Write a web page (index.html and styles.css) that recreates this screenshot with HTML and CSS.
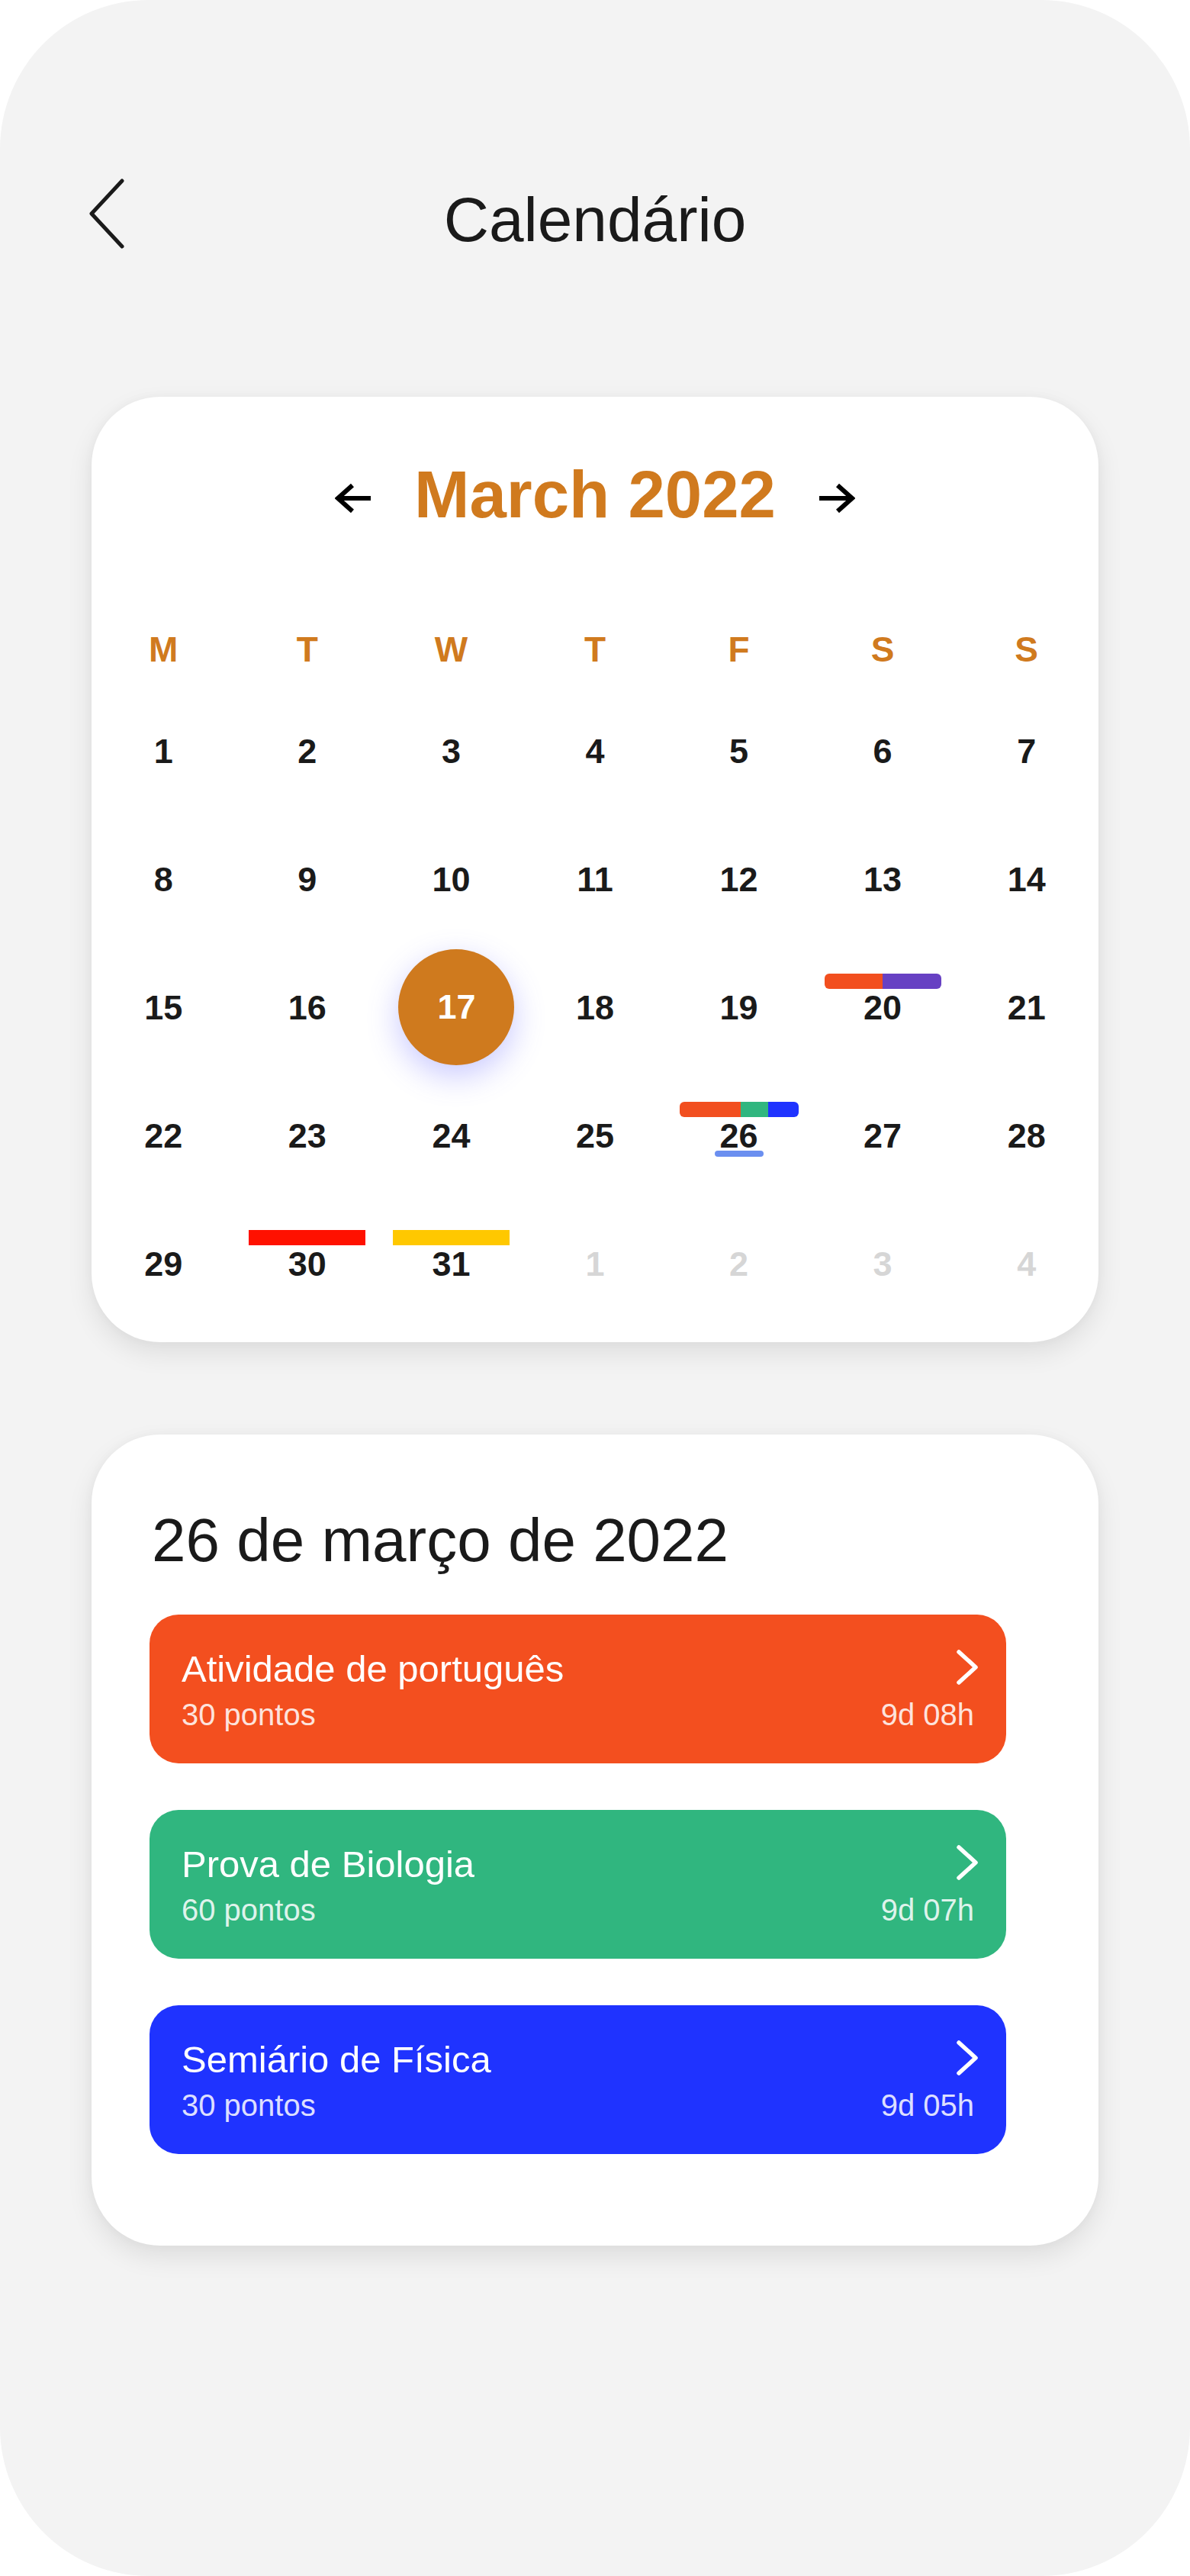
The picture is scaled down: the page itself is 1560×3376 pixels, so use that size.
FILE: index.html
```html
<!DOCTYPE html>
<html lang="pt">
<head>
<meta charset="utf-8">
<title>Calendário</title>
<link rel="stylesheet" href="styles.css">
</head>
<body>
<div class="phone">
  <header class="topbar">
    <button class="back" aria-label="Voltar">
      <svg width="50" height="94" viewBox="0 0 50 94"><path d="M45 4 L5 47 L45 90" fill="none" stroke="#1a1a1a" stroke-width="5" stroke-linecap="round" stroke-linejoin="round"/></svg>
    </button>
    <h1 class="title">Calendário</h1>
    <span class="spacer"></span>
  </header>

  <section class="card cal">
    <div class="month">
      <svg class="arrow" width="50" height="40" viewBox="0 0 50 40"><path d="M47 20 H5 M23 3 L4 20 L23 37" fill="none" stroke="#000" stroke-width="6" stroke-linejoin="miter"/></svg>
      <h2 class="month-name">March 2022</h2>
      <svg class="arrow" width="50" height="40" viewBox="0 0 50 40"><path d="M3 20 H45 M27 3 L46 20 L27 37" fill="none" stroke="#000" stroke-width="6" stroke-linejoin="miter"/></svg>
    </div>

    <div class="weekdays">
      <span>M</span><span>T</span><span>W</span><span>T</span><span>F</span><span>S</span><span>S</span>
    </div>

    <div class="days">
      <div class="cell"><span class="mark"></span><span class="num">1</span></div>
      <div class="cell"><span class="mark"></span><span class="num">2</span></div>
      <div class="cell"><span class="mark"></span><span class="num">3</span></div>
      <div class="cell"><span class="mark"></span><span class="num">4</span></div>
      <div class="cell"><span class="mark"></span><span class="num">5</span></div>
      <div class="cell"><span class="mark"></span><span class="num">6</span></div>
      <div class="cell"><span class="mark"></span><span class="num">7</span></div>

      <div class="cell"><span class="mark"></span><span class="num">8</span></div>
      <div class="cell"><span class="mark"></span><span class="num">9</span></div>
      <div class="cell"><span class="mark"></span><span class="num">10</span></div>
      <div class="cell"><span class="mark"></span><span class="num">11</span></div>
      <div class="cell"><span class="mark"></span><span class="num">12</span></div>
      <div class="cell"><span class="mark"></span><span class="num">13</span></div>
      <div class="cell"><span class="mark"></span><span class="num">14</span></div>

      <div class="cell"><span class="mark"></span><span class="num">15</span></div>
      <div class="cell"><span class="mark"></span><span class="num">16</span></div>
      <div class="cell sel"><span class="circle"><span class="num">17</span></span></div>
      <div class="cell"><span class="mark"></span><span class="num">18</span></div>
      <div class="cell"><span class="mark"></span><span class="num">19</span></div>
      <div class="cell"><span class="mark on rounded"><i class="seg s-orange"></i><i class="seg s-purple"></i></span><span class="num">20</span></div>
      <div class="cell"><span class="mark"></span><span class="num">21</span></div>

      <div class="cell"><span class="mark"></span><span class="num">22</span></div>
      <div class="cell"><span class="mark"></span><span class="num">23</span></div>
      <div class="cell"><span class="mark"></span><span class="num">24</span></div>
      <div class="cell"><span class="mark"></span><span class="num">25</span></div>
      <div class="cell"><span class="mark on rounded wide"><i class="seg s-orange w80"></i><i class="seg s-green w36"></i><i class="seg s-blue w40"></i></span><span class="num">26</span><span class="uline"></span></div>
      <div class="cell"><span class="mark"></span><span class="num">27</span></div>
      <div class="cell"><span class="mark"></span><span class="num">28</span></div>

      <div class="cell"><span class="mark"></span><span class="num">29</span></div>
      <div class="cell"><span class="mark on"><i class="seg s-red"></i></span><span class="num">30</span></div>
      <div class="cell"><span class="mark on"><i class="seg s-yellow"></i></span><span class="num">31</span></div>
      <div class="cell other"><span class="mark"></span><span class="num">1</span></div>
      <div class="cell other"><span class="mark"></span><span class="num">2</span></div>
      <div class="cell other"><span class="mark"></span><span class="num">3</span></div>
      <div class="cell other"><span class="mark"></span><span class="num">4</span></div>
    </div>
  </section>

  <section class="card agenda">
    <h2 class="agenda-date">26 de março de 2022</h2>
    <ul class="events">
      <li class="event ev-orange">
        <div class="ev-row top"><span class="ev-title">Atividade de português</span><svg class="chev" width="30" height="48" viewBox="0 0 30 48"><path d="M4 4 L26 24 L4 44" fill="none" stroke="#fff" stroke-width="5.5" stroke-linecap="round" stroke-linejoin="round"/></svg></div>
        <div class="ev-row bottom"><span class="ev-sub">30 pontos</span><span class="ev-sub">9d 08h</span></div>
      </li>
      <li class="event ev-green">
        <div class="ev-row top"><span class="ev-title">Prova de Biologia</span><svg class="chev" width="30" height="48" viewBox="0 0 30 48"><path d="M4 4 L26 24 L4 44" fill="none" stroke="#fff" stroke-width="5.5" stroke-linecap="round" stroke-linejoin="round"/></svg></div>
        <div class="ev-row bottom"><span class="ev-sub">60 pontos</span><span class="ev-sub">9d 07h</span></div>
      </li>
      <li class="event ev-blue">
        <div class="ev-row top"><span class="ev-title">Semiário de Física</span><svg class="chev" width="30" height="48" viewBox="0 0 30 48"><path d="M4 4 L26 24 L4 44" fill="none" stroke="#fff" stroke-width="5.5" stroke-linecap="round" stroke-linejoin="round"/></svg></div>
        <div class="ev-row bottom"><span class="ev-sub">30 pontos</span><span class="ev-sub">9d 05h</span></div>
      </li>
    </ul>
  </section>
</div>
</body>
</html>
```

FILE: styles.css
```css
* { box-sizing: border-box; }

html, body {
  margin: 0;
  padding: 0;
  background: #ffffff;
}

body {
  font-family: "Liberation Sans", Arial, sans-serif;
  color: #1a1a1a;
}

.phone {
  width: 1560px;
  height: 3376px;
  background: #f3f3f3;
  border-radius: 195px;
  overflow: hidden;
  padding-top: 233px;
}

/* Header */
.topbar {
  display: grid;
  grid-template-columns: 1fr auto 1fr;
  align-items: start;
}

.back {
  justify-self: start;
  margin-left: 115px;
  padding: 0;
  border: 0;
  background: none;
  width: 50px;
  height: 94px;
  display: block;
}

.back svg { display: block; }

.title {
  margin: 8px 0 0;
  font-size: 82px;
  line-height: 93px;
  font-weight: 400;
  color: #1a1a1a;
}

/* Cards */
.card {
  background: #ffffff;
  border-radius: 90px;
  margin: 0 120px;
  box-shadow: 0 14px 34px rgba(0, 0, 0, 0.09), 0 0 14px rgba(0, 0, 0, 0.03);
}

.cal {
  margin-top: 186px;
  padding: 78px 0 19px;
}

.month {
  display: flex;
  justify-content: center;
  align-items: center;
  gap: 54px;
}

.arrow {
  display: block;
  margin-top: 10px;
}

.month-name {
  margin: 0;
  font-size: 87px;
  line-height: 99px;
  font-weight: 700;
  color: #d07a1e;
}

.weekdays {
  margin-top: 128px;
  display: grid;
  grid-template-columns: repeat(7, 1fr);
  text-align: center;
  font-size: 46px;
  line-height: 53px;
  font-weight: 700;
  color: #d07a1e;
}

.days {
  margin-top: 22px;
  display: grid;
  grid-template-columns: repeat(7, 1fr);
  grid-auto-rows: 168px;
}

.cell {
  display: flex;
  flex-direction: column;
  align-items: center;
  padding-top: 40px;
}

.mark {
  display: flex;
  width: 153px;
  height: 20px;
  flex: none;
  overflow: hidden;
}

.mark.rounded { border-radius: 6px; }
.mark.wide { width: 156px; }

.seg { display: block; flex: 1; height: 100%; }
.seg.w80 { flex: 80; }
.seg.w36 { flex: 36; }
.seg.w40 { flex: 40; }

.s-orange { background: #f24f1f; }
.s-purple { background: #6741c3; }
.s-green { background: #30b67f; }
.s-blue { background: #1f33ff; }
.s-red { background: #ff1100; }
.s-yellow { background: #ffc800; }

.num {
  font-size: 45px;
  line-height: 50px;
  font-weight: 700;
  color: #1a1a1a;
}

.other .num { color: #d6d6d6; }

.uline {
  width: 64px;
  height: 8px;
  margin-top: -6px;
  border-radius: 4px;
  background: #6b8ff0;
}

.cell.sel {
  padding-top: 0;
  justify-content: center;
}

.circle {
  width: 152px;
  height: 152px;
  border-radius: 50%;
  background: #cf7a1e;
  display: flex;
  align-items: center;
  justify-content: center;
  margin-left: 14px;
  box-shadow: 0 14px 40px rgba(95, 95, 255, 0.33);
}

.circle .num { color: #ffffff; }

/* Agenda */
.agenda {
  margin-top: 121px;
  padding: 94px 121px 120px 76px;
}

.agenda-date {
  margin: 0 0 0 3px;
  font-size: 80px;
  line-height: 90px;
  font-weight: 400;
  color: #1a1a1a;
}

.events {
  list-style: none;
  margin: 52px 0 0;
  padding: 0;
  display: flex;
  flex-direction: column;
  gap: 61px;
}

.event {
  height: 195px;
  border-radius: 38px;
  padding: 44px 42px 0 42px;
  color: #ffffff;
}

.ev-orange { background: #f34f1f; }
.ev-green { background: #30b67f; }
.ev-blue { background: #1f33ff; }

.ev-row {
  display: flex;
  justify-content: space-between;
  align-items: center;
}

.ev-row.bottom { margin-top: 11px; }

.ev-title {
  font-size: 49px;
  line-height: 54px;
}

.chev {
  display: block;
  margin-right: -6px;
  margin-top: -4px;
}

.ev-sub {
  font-size: 40px;
  line-height: 44px;
  color: rgba(255, 255, 255, 0.86);
}
```
